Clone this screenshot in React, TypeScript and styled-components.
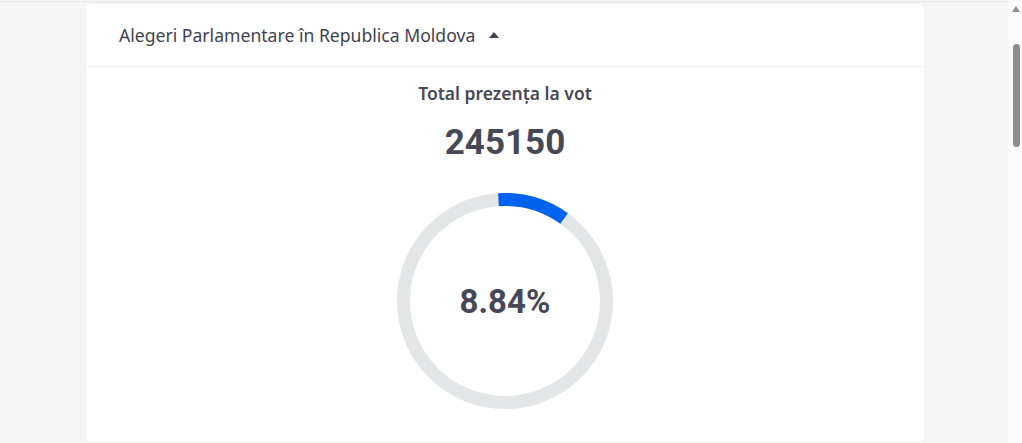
import React, { useLayoutEffect, useRef } from "react";
import styled, { createGlobalStyle } from "styled-components";

const GlobalStyle = createGlobalStyle`
  html, body {
    margin: 0;
    padding: 0;
    background: #f5f5f5;
    overflow: hidden;
  }
  body {
    font-family: "Noto Sans", "Open Sans", sans-serif;
    color: #474856;
  }
`;

const TURNOUT = 245150;
const PERCENT = 8.84;
const SCROLL_TOP = 125;
const DOC_HEIGHT = 1776;

const Shell = styled.div`
  display: flex;
  height: 100vh;
`;

const Scroller = styled.div`
  flex: 1;
  min-width: 0;
  overflow: hidden;
`;

const ScrollTrack = styled.div`
  width: 14px;
  flex-shrink: 0;
  background: #fafafa;
  display: flex;
  flex-direction: column;
  align-items: center;
`;

const ScrollArrow = styled.span`
  margin-top: 6px;
  margin-left: 1px;
  width: 0;
  height: 0;
  border-left: 4px solid transparent;
  border-right: 4px solid transparent;
  border-bottom: 6px solid #8f8f8f;
`;

const ScrollThumb = styled.span`
  margin-top: 32px;
  margin-left: 3px;
  width: 7px;
  height: 103px;
  border-radius: 4px;
  background: #8c8c8c;
`;

const Page = styled.div`
  min-height: ${DOC_HEIGHT}px;
`;

const TopBar = styled.div`
  height: 126px;
  border-bottom: 1px solid #e9e9ea;
`;

const Container = styled.main`
  padding: 2px 84px 0 86px;
`;

const Card = styled.section`
  background: #ffffff;
  border-radius: 4px;
  box-shadow: 0 0 1px rgba(0, 0, 0, 0.1);
  overflow: hidden;
`;

const CardHeader = styled.button`
  display: flex;
  align-items: center;
  gap: 14px;
  width: 100%;
  height: 63px;
  padding: 0 0 0 33px;
  border: 0;
  border-bottom: 1px solid #f1f1f2;
  background: transparent;
  font-family: inherit;
  font-size: 17.6px;
  color: #41424f;
  cursor: pointer;
  text-align: left;
`;

const Caret = styled.span`
  width: 0;
  height: 0;
  border-left: 5px solid transparent;
  border-right: 5px solid transparent;
  border-bottom: 6px solid #41424f;
  margin-top: -1px;
`;

const CardBody = styled.div`
  display: flex;
  flex-direction: column;
  align-items: center;
  padding: 15px 0 33px;
`;

const Label = styled.div`
  font-size: 17.5px;
  font-weight: 600;
  line-height: 22px;
  color: #474856;
`;

const Total = styled.div`
  margin-top: 18px;
  font-family: Roboto, "Liberation Sans", sans-serif;
  font-size: 35px;
  font-weight: 700;
  line-height: 42px;
  color: #474856;
`;

const Gauge = styled.div`
  position: relative;
  margin-top: 29px;
  width: 216px;
  height: 216px;
`;

const GaugeValue = styled.div`
  position: absolute;
  inset: 0;
  display: flex;
  align-items: center;
  justify-content: center;
  font-family: Roboto, "Liberation Sans", sans-serif;
  font-size: 33px;
  font-weight: 700;
  color: #474856;
`;

// the arc is drawn a little wider than the raw value, starting just before 12 o'clock
const ARC_START = -3.7;
const ARC_PAD = 7.4;

function Ring({ percent }: { percent: number }) {
  const r = 101.5;
  const c = 2 * Math.PI * r;
  const sweep = percent * 3.6 + ARC_PAD;
  const filled = (c * sweep) / 360;
  return (
    <svg width="216" height="216" viewBox="0 0 216 216">
      <circle cx="108" cy="108" r={r} fill="none" stroke="#e4e5e7" strokeWidth="13" />
      <circle
        cx="108"
        cy="108"
        r={r}
        fill="none"
        stroke="#0062ee"
        strokeWidth="13"
        strokeDasharray={`${filled} ${c}`}
        transform={`rotate(${-90 + ARC_START} 108 108)`}
      />
    </svg>
  );
}

export default function App() {
  const scroller = useRef<HTMLDivElement>(null);

  useLayoutEffect(() => {
    if (scroller.current) scroller.current.scrollTop = SCROLL_TOP;
  }, []);

  return (
    <Shell>
      <GlobalStyle />
      <Scroller ref={scroller}>
        <Page>
          <TopBar />
          <Container>
            <Card>
              <CardHeader>
                Alegeri Parlamentare în Republica Moldova
                <Caret />
              </CardHeader>
              <CardBody>
                <Label>Total prezența la vot</Label>
                <Total>{TURNOUT}</Total>
                <Gauge>
                  <Ring percent={PERCENT} />
                  <GaugeValue>{PERCENT}%</GaugeValue>
                </Gauge>
              </CardBody>
            </Card>
          </Container>
        </Page>
      </Scroller>
      <ScrollTrack aria-hidden>
        <ScrollArrow />
        <ScrollThumb />
      </ScrollTrack>
    </Shell>
  );
}
